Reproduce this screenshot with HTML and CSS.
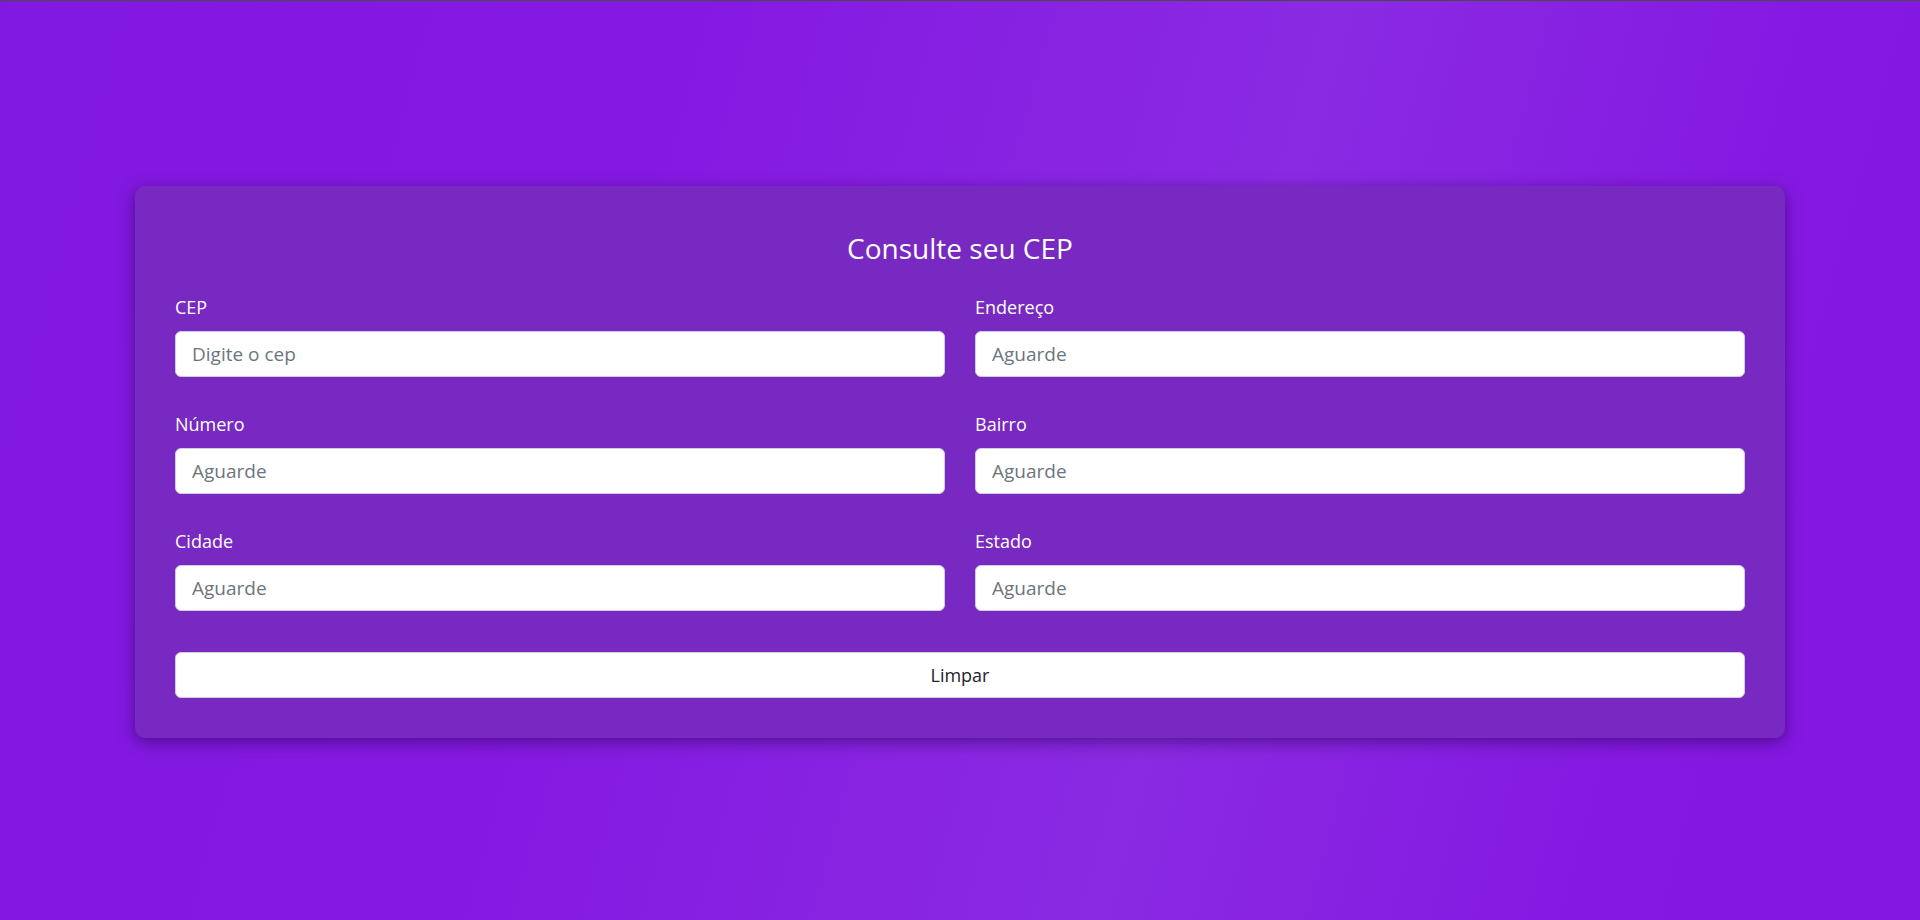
FILE: index.html
```html
<!DOCTYPE html>
<html lang="pt-BR">
<head>
<meta charset="utf-8">
<title>Consulte seu CEP</title>
<link rel="stylesheet" href="styles.css">
</head>
<body>
<div class="topline"></div>
<main class="page">
  <form class="card">
    <h1 class="title">Consulte seu CEP</h1>
    <div class="grid">
      <div class="field">
        <label class="label" for="cep">CEP</label>
        <input class="input" id="cep" type="text" placeholder="Digite o cep">
      </div>
      <div class="field">
        <label class="label" for="endereco">Endereço</label>
        <input class="input" id="endereco" type="text" placeholder="Aguarde">
      </div>
      <div class="field">
        <label class="label" for="numero">Número</label>
        <input class="input" id="numero" type="text" placeholder="Aguarde">
      </div>
      <div class="field">
        <label class="label" for="bairro">Bairro</label>
        <input class="input" id="bairro" type="text" placeholder="Aguarde">
      </div>
      <div class="field">
        <label class="label" for="cidade">Cidade</label>
        <input class="input" id="cidade" type="text" placeholder="Aguarde">
      </div>
      <div class="field">
        <label class="label" for="estado">Estado</label>
        <input class="input" id="estado" type="text" placeholder="Aguarde">
      </div>
    </div>
    <button class="button" type="reset">Limpar</button>
  </form>
</main>
</body>
</html>
```
FILE: styles.css
```css
* { box-sizing: border-box; }
html, body { margin: 0; padding: 0; }
body {
  min-height: 100vh;
  display: flex;
  flex-direction: column;
  font-family: "Open Sans", "Noto Sans", sans-serif;
  background: linear-gradient(105deg, #8118e0 0%, #8519e2 32%, #8a2ae2 62%, #8519e2 84%, #8117e0 100%);
}
.topline {
  height: 1px;
  background: #4a4a4a;
  flex: none;
}
.page {
  flex: 1;
  display: flex;
  align-items: center;
  justify-content: center;
  padding-top: 2px;
}
.card {
  width: 1650px;
  padding: 40px;
  background: #7829c1;
  border-radius: 10px;
  box-shadow: 0 4px 16px rgba(40, 0, 80, 0.55);
}
.title {
  margin: 5px 0 29px;
  font-size: 28px;
  line-height: 34px;
  font-weight: 400;
  color: #ffffff;
  text-align: center;
}
.grid {
  display: grid;
  grid-template-columns: 1fr 1fr;
  column-gap: 30px;
  row-gap: 34px;
}
.field {
  display: flex;
  flex-direction: column;
}
.label {
  display: block;
  font-size: 18px;
  line-height: 27px;
  margin-bottom: 10px;
  color: #ffffff;
}
.input {
  height: 46px;
  width: 100%;
  padding: 0 16px;
  font-family: inherit;
  font-size: 19px;
  color: #212529;
  background: #ffffff;
  border: 1px solid #cfcde0;
  border-radius: 6px;
  outline: none;
}
.input::placeholder { color: #6c757d; opacity: 1; }
.button {
  display: block;
  width: 100%;
  height: 46px;
  margin-top: 41px;
  font-family: inherit;
  font-size: 18px;
  color: #212529;
  background: #ffffff;
  border: 1px solid #cfcde0;
  border-radius: 6px;
  cursor: pointer;
}
```
